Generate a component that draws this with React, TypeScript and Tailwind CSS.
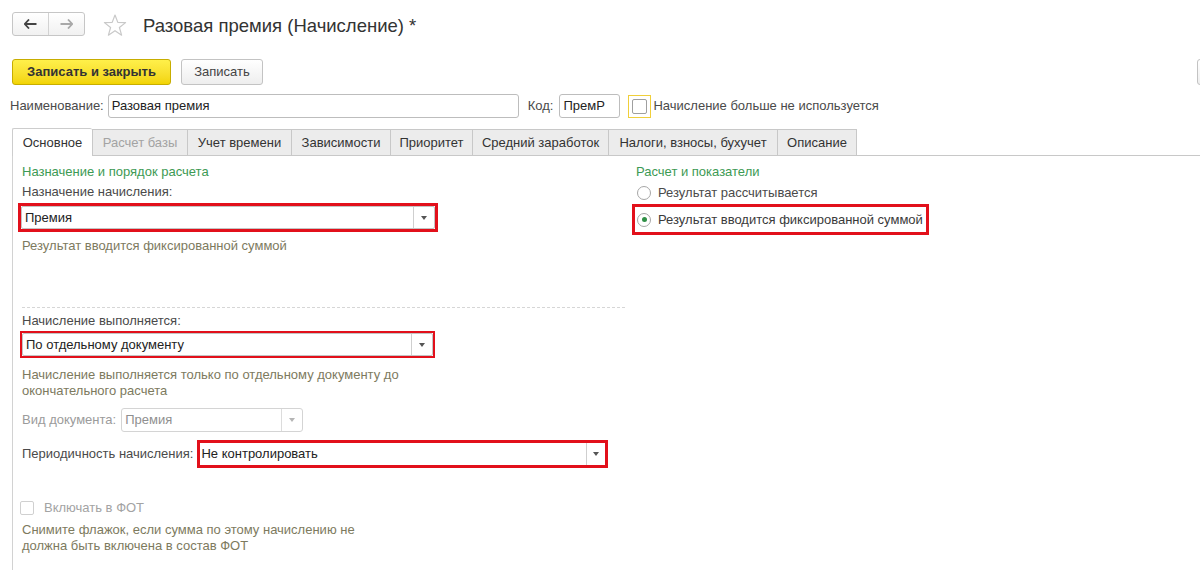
import React from "react";

const Arrow = ({ disabled }: { disabled?: boolean }) => (
  <svg width="6" height="4" viewBox="0 0 6 4" className="shrink-0">
    <path d="M0 0 L6 0 L3 4 Z" fill={disabled ? "#b5b5b5" : "#555"} />
  </svg>
);

function Dropdown({ text, width, disabled }: { text: string; width: number; disabled?: boolean }) {
  return (
    <div
      className={`flex h-[23px] items-stretch rounded-[2px] border bg-white ${disabled ? "border-[#d4d4d4]" : "border-[#c4c4c4]"}`}
      style={{ width }}
    >
      <div className={`flex flex-1 items-center pl-[3px] ${disabled ? "text-[#8f8f8f]" : "text-[#222]"}`}>{text}</div>
      <div className={`flex w-[21px] items-center justify-center border-l ${disabled ? "border-[#d8d8d8]" : "border-[#cfcfcf]"}`}>
        <Arrow disabled={disabled} />
      </div>
    </div>
  );
}

function Radio({ checked }: { checked?: boolean }) {
  return (
    <span className="flex h-[14px] w-[14px] shrink-0 items-center justify-center rounded-full border border-[#a6a6a6] bg-white">
      {checked && <span className="h-[5px] w-[5px] rounded-full bg-[#2f8f46]" />}
    </span>
  );
}

const tabs = [
  { label: "Основное", w: 80, active: true },
  { label: "Расчет базы", w: 95, disabled: true },
  { label: "Учет времени", w: 104 },
  { label: "Зависимости", w: 99 },
  { label: "Приоритет", w: 82 },
  { label: "Средний заработок", w: 136 },
  { label: "Налоги, взносы, бухучет", w: 169 },
  { label: "Описание", w: 80 },
];

export default function App() {
  return (
    <div className="h-[570px] w-[1200px] overflow-hidden bg-white font-['Liberation_Sans',Arial,sans-serif] text-[13px] leading-[16px] text-[#4a4a4a]">
      {/* header */}
      <div className="mt-[12px] flex h-[24px] items-center pl-[12px]">
        <div className="flex h-[24px] w-[73px] rounded-[3px] border border-[#c6c6c6] bg-gradient-to-b from-white to-[#f1f1f1]">
          <div className="flex w-[36px] items-center justify-center border-r border-[#d2d2d2]">
            <svg width="13" height="10" viewBox="0 0 13 10">
              <path d="M5 0.5 L0.8 5 L5 9.5" fill="none" stroke="#444" strokeWidth="1.8" />
              <path d="M1 5 H12.5" stroke="#444" strokeWidth="2" />
            </svg>
          </div>
          <div className="flex flex-1 items-center justify-center">
            <svg width="13" height="10" viewBox="0 0 13 10">
              <path d="M8 0.5 L12.2 5 L8 9.5" fill="none" stroke="#a9a9a9" strokeWidth="1.8" />
              <path d="M0.5 5 H12" stroke="#a9a9a9" strokeWidth="2" />
            </svg>
          </div>
        </div>
        <svg width="24" height="23" viewBox="0 0 24 23" className="ml-[18px] mt-[2px]">
          <path
            d="M12 1 L14.8 8.4 L22.6 8.6 L16.4 13.5 L18.6 21.2 L12 16.7 L5.4 21.2 L7.6 13.5 L1.4 8.6 L9.2 8.4 Z"
            fill="none"
            stroke="#c9c9c9"
            strokeWidth="1.2"
            strokeLinejoin="round"
          />
        </svg>
        <div className="ml-[16px] mt-[3px] text-[18.5px] text-[#333]">Разовая премия (Начисление) *</div>
      </div>

      {/* command bar */}
      <div className="mt-[23px] flex h-[26px] items-center pl-[12px]">
        <button className="flex h-[26px] w-[159px] items-center justify-center rounded-[3px] border border-[#c7ad00] bg-gradient-to-b from-[#fff04a] to-[#f2d400] text-[13px] font-bold text-[#333]">
          Записать и закрыть
        </button>
        <button className="ml-[10px] flex h-[26px] w-[82px] items-center justify-center rounded-[3px] border border-[#c3c3c3] bg-gradient-to-b from-white to-[#eeeeee] text-[#444]">
          Записать
        </button>
        <div className="flex-1" />
        <div className="mr-[-30px] h-[26px] w-[33px] shrink-0 rounded-[3px] border border-[#c3c3c3] bg-gradient-to-b from-white to-[#eeeeee]" />
      </div>

      {/* name row */}
      <div className="mt-[9px] flex h-[24px] items-center">
        <span className="ml-[10px]">Наименование:</span>
        <div className="ml-[4px] flex h-[24px] w-[411px] items-center rounded-[3px] border border-[#bdbdbd] pl-[3px] text-[#222]">
          Разовая премия
        </div>
        <span className="ml-[9px]">Код:</span>
        <div className="ml-[6px] flex h-[24px] w-[61px] items-center rounded-[3px] border border-[#bdbdbd] pl-[3px] text-[#222]">
          ПремР
        </div>
        <div className="ml-[8px] flex h-[23px] w-[23px] items-center justify-center border border-[#f0cf3a]">
          <span className="h-[15px] w-[15px] rounded-[2px] border border-[#9f9f9f] bg-white" />
        </div>
        <span className="ml-[2px]">Начисление больше не используется</span>
      </div>

      {/* tabs */}
      <div className="mt-[10px] flex h-[28px] items-end pl-[12px]">
        {tabs.map((t, i) => (
          <div
            key={t.label}
            style={{ width: t.w }}
            className={`flex shrink-0 items-center justify-center border-l border-t ${i === tabs.length - 1 ? "border-r" : ""} ${
              t.active
                ? "h-[28px] rounded-t-[2px] border-[#cdcdcd] bg-white text-[#333]"
                : "h-[27px] border-b border-[#c8c8c8] bg-[#ececec] " + (t.disabled ? "text-[#a3a3a3]" : "text-[#333]")
            }`}
          >
            {t.label}
          </div>
        ))}
        <div className="h-[27px] flex-1 border-b border-[#c8c8c8]" />
      </div>

      {/* content */}
      <div className="flex">
        <div className="ml-[12px] h-[420px] w-[620px] shrink-0 border-l border-[#d2d2d2] pl-[9px]">
          <div className="mt-[8px] text-[#3d9a54]">Назначение и порядок расчета</div>
          <div className="mt-[4px]">Назначение начисления:</div>
          <div className="ml-[-4px] mt-[3px] w-fit border-[3px] border-[#e2101b] bg-white">
            <Dropdown text="Премия" width={414} />
          </div>
          <div className="mt-[6px] text-[#7d7a5e]">Результат вводится фиксированной суммой</div>
          <div className="mt-[53px] w-[603px] border-t border-dashed border-[#d6d6d6]" />
          <div className="mt-[5px]">Начисление выполняется:</div>
          <div className="ml-[-2px] mt-[2px] w-fit border-2 border-[#e2101b] bg-white">
            <Dropdown text="По отдельному документу" width={411} />
          </div>
          <div className="mt-[9px] w-[400px] text-[#7d7a5e]">
            Начисление выполняется только по отдельному документу до окончательного расчета
          </div>
          <div className="mt-[9px] flex h-[24px] items-center">
            <span className="text-[#9b9b9b]">Вид документа:</span>
            <div className="ml-[5px]">
              <div className="flex h-[24px] w-[182px] items-stretch rounded-[3px] border border-[#d4d4d4] bg-white">
                <div className="flex flex-1 items-center pl-[3px] text-[#8f8f8f]">Премия</div>
                <div className="flex w-[21px] items-center justify-center border-l border-[#dcdcdc]">
                  <Arrow disabled />
                </div>
              </div>
            </div>
          </div>
          <div className="mt-[8px] flex h-[28px] items-center">
            <span>Периодичность начисления:</span>
            <div className="ml-[4px] border-[3px] border-[#e2101b] bg-white">
              <div className="flex h-[22px] w-[405px] items-stretch bg-white">
                <div className="flex flex-1 items-center pl-[1px] text-[#222]">Не контролировать</div>
                <div className="flex w-[19px] items-center justify-center border-l border-[#cfcfcf]">
                  <Arrow />
                </div>
              </div>
            </div>
          </div>
          <div className="mt-[32px] flex h-[16px] items-center">
            <span className="ml-[-2px] h-[14px] w-[14px] rounded-[2px] border border-[#d0d0d0] bg-white" />
            <span className="ml-[10px] text-[#a3a3a3]">Включать в ФОТ</span>
          </div>
          <div className="mt-[6px] w-[340px] text-[#7d7a5e]">
            Снимите флажок, если сумма по этому начислению не должна быть включена в состав ФОТ
          </div>
        </div>

        <div className="flex-1">
          <div className="mt-[8px] pl-[4px] text-[#3d9a54]">Расчет и показатели</div>
          <div className="mt-[5px] flex h-[16px] items-center pl-[5px]">
            <Radio />
            <span className="ml-[7px]">Результат рассчитывается</span>
          </div>
          <div className="mt-[3px] flex h-[31px] w-[297px] items-center border-[3px] border-[#e2101b] pl-[2px]">
            <Radio checked />
            <span className="ml-[7px] text-[#3a3a3a]">Результат вводится фиксированной суммой</span>
          </div>
        </div>
      </div>
    </div>
  );
}
